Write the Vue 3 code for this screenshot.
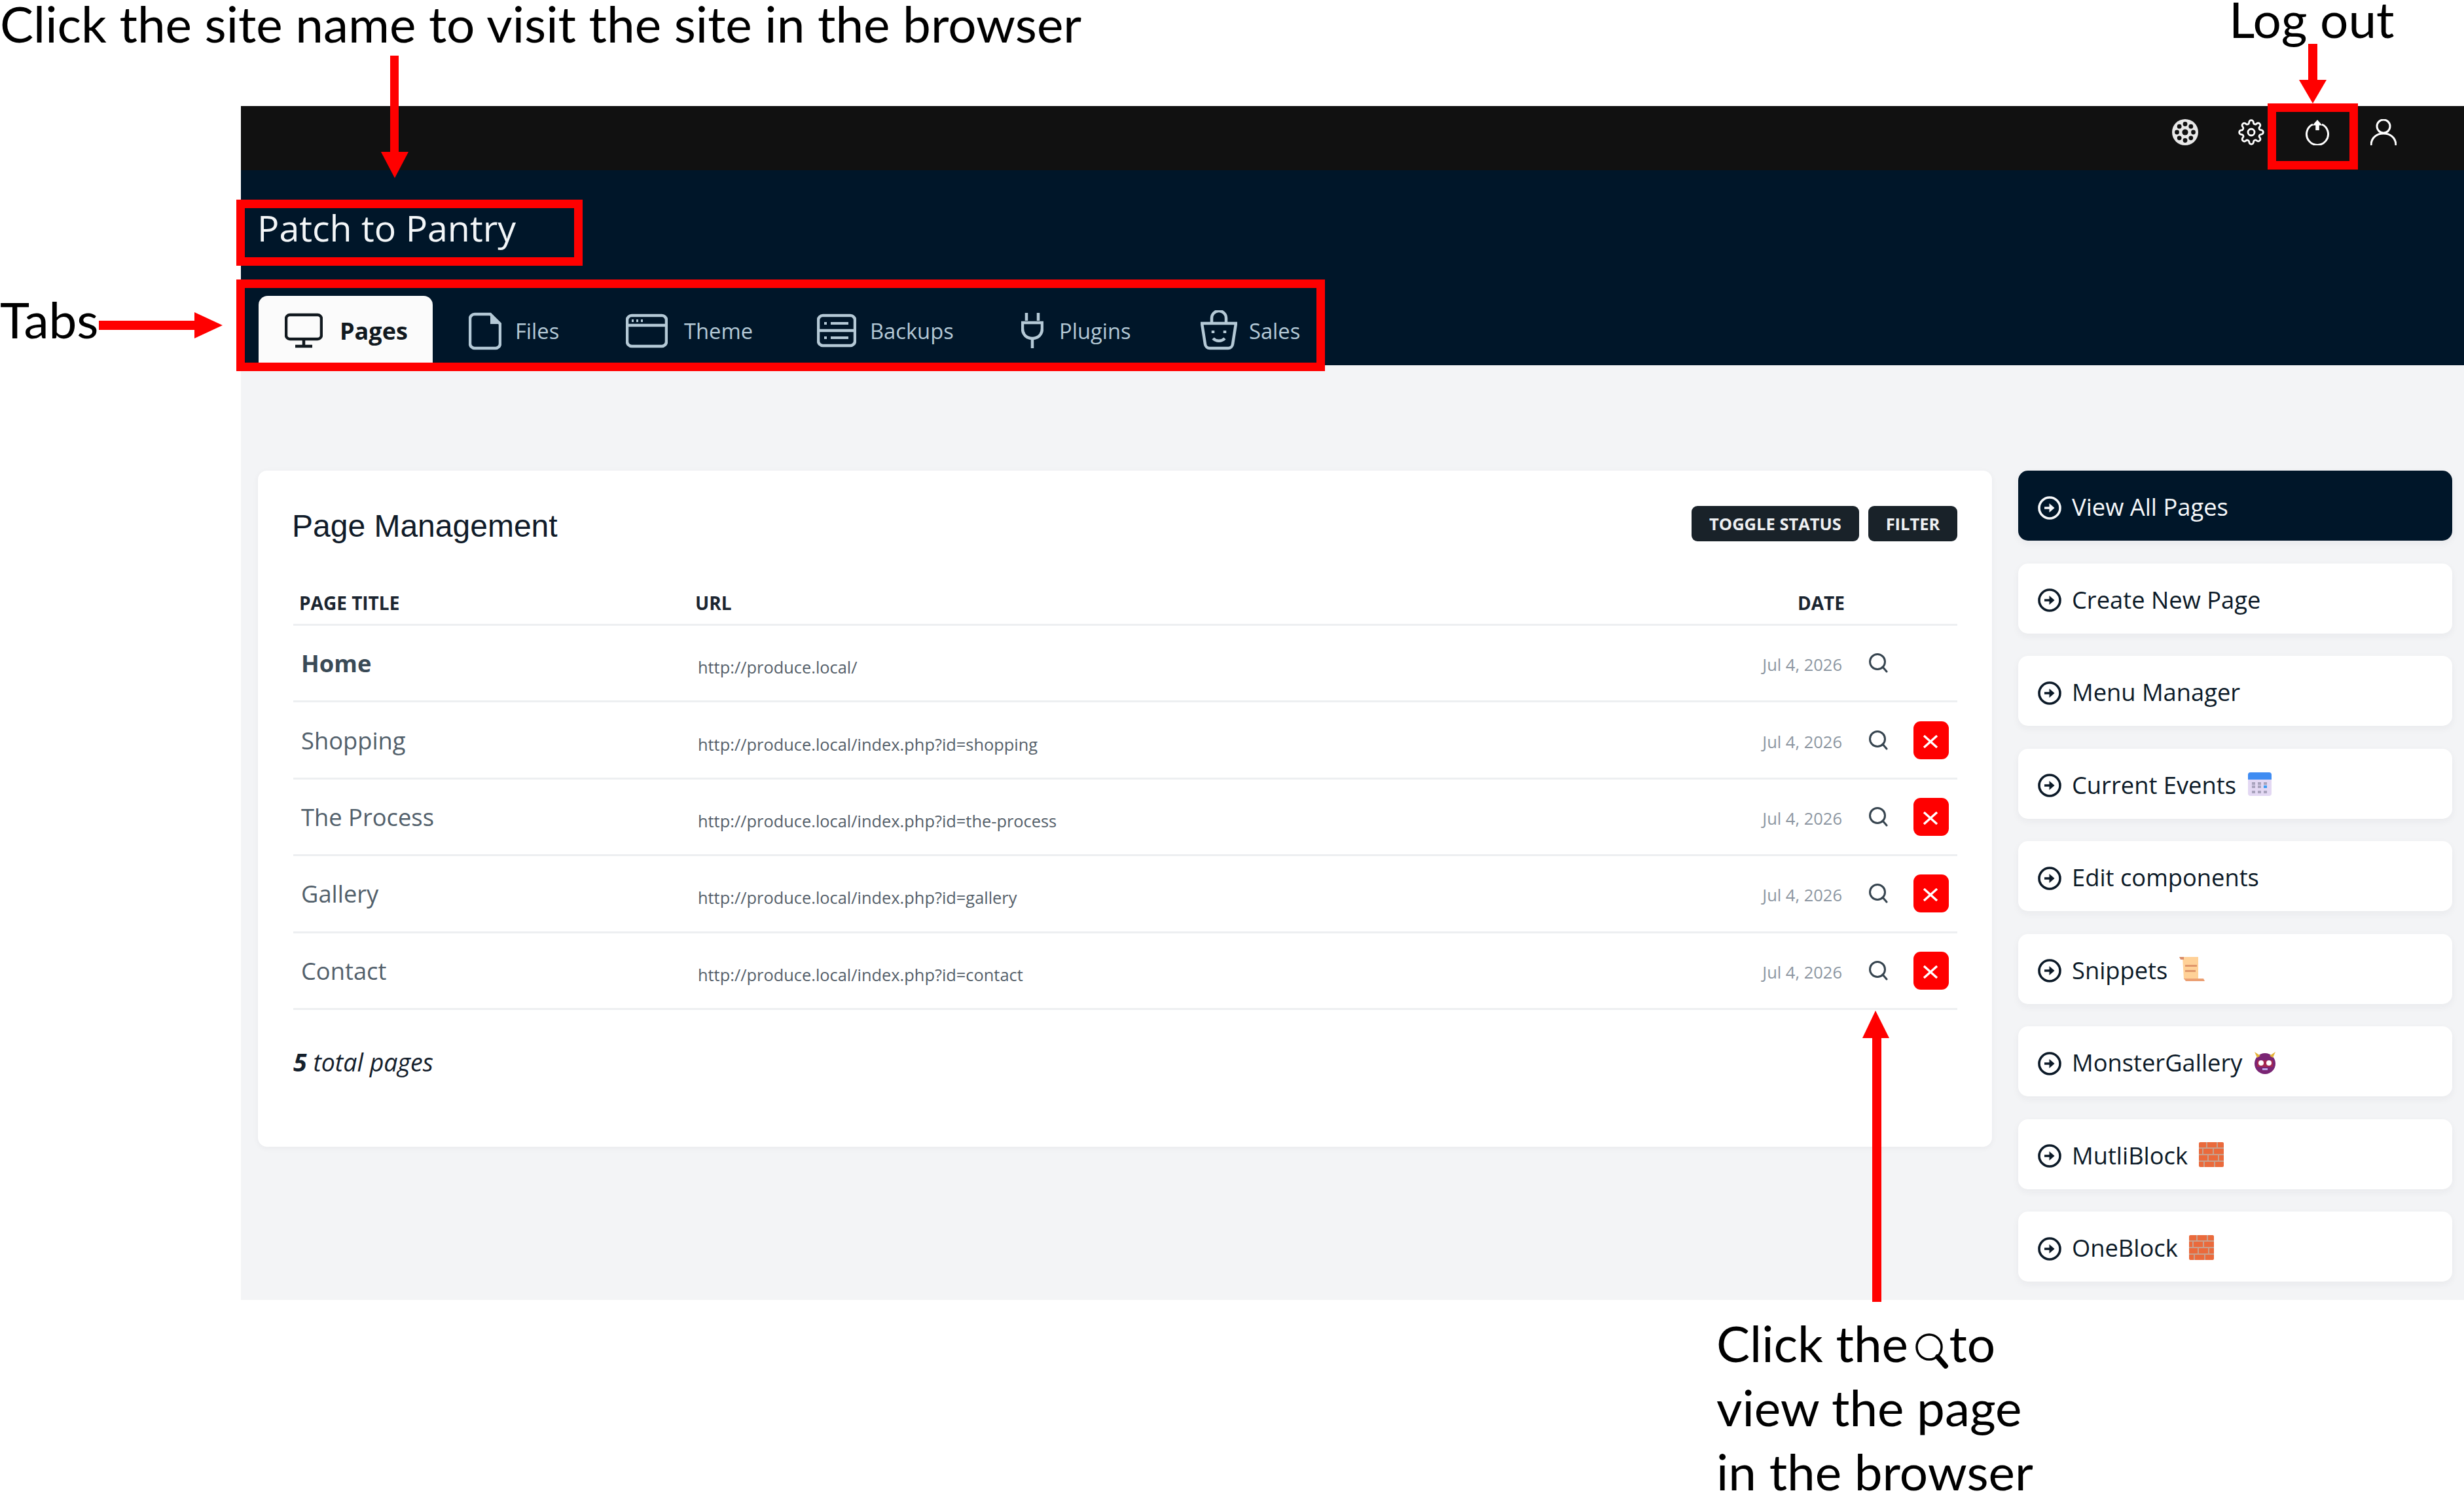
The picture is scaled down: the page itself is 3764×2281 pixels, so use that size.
<template>
  <div class="page">
    <div class="app">
      <div class="topbar">
        <svg class="top-icon" viewBox="0 0 40 40">
          <circle cx="20" cy="20" r="20" fill="#e8e8e8" />
          <circle cx="20" cy="20" r="4.6" fill="#111" />
          <circle v-for="d in wheelDots" :key="d.x + '-' + d.y" :cx="d.x" :cy="d.y" r="3.4" fill="#111" />
        </svg>
        <svg class="top-icon" viewBox="0 0 24 24" fill="none" stroke="currentColor" stroke-width="1.7">
          <circle cx="12" cy="12" r="3" />
          <path d="M19.4 15a1.65 1.65 0 0 0 .33 1.82l.06.06a2 2 0 0 1 0 2.83 2 2 0 0 1-2.83 0l-.06-.06a1.65 1.65 0 0 0-1.82-.33 1.65 1.65 0 0 0-1 1.51V21a2 2 0 0 1-2 2 2 2 0 0 1-2-2v-.09A1.65 1.65 0 0 0 9 19.4a1.65 1.65 0 0 0-1.82.33l-.06.06a2 2 0 0 1-2.83 0 2 2 0 0 1 0-2.83l.06-.06a1.65 1.65 0 0 0 .33-1.82 1.65 1.65 0 0 0-1.51-1H3a2 2 0 0 1-2-2 2 2 0 0 1 2-2h.09A1.65 1.65 0 0 0 4.6 9a1.65 1.65 0 0 0-.33-1.82l-.06-.06a2 2 0 0 1 0-2.83 2 2 0 0 1 2.83 0l.06.06a1.65 1.65 0 0 0 1.82.33H9a1.65 1.65 0 0 0 1-1.51V3a2 2 0 0 1 2-2 2 2 0 0 1 2 2v.09a1.65 1.65 0 0 0 1 1.51 1.65 1.65 0 0 0 1.82-.33l.06-.06a2 2 0 0 1 2.83 0 2 2 0 0 1 0 2.83l-.06.06a1.65 1.65 0 0 0-.33 1.82V9a1.65 1.65 0 0 0 1.51 1H21a2 2 0 0 1 2 2 2 2 0 0 1-2 2h-.09a1.65 1.65 0 0 0-1.51 1z" />
        </svg>
        <svg class="top-icon" viewBox="0 0 40 40" fill="none" stroke="currentColor" stroke-width="3">
          <path d="M13 8a16.5 16.5 0 1 0 14 0" />
          <path d="M20 17V6" stroke-width="5.5" />
          <path d="M12.5 9.5L20 1l7.5 8.5z" fill="currentColor" stroke="none" />
        </svg>
        <svg class="top-icon" viewBox="0 0 40 40" fill="none" stroke="currentColor" stroke-width="3">
          <circle cx="20" cy="11" r="10" />
          <path d="M1 40c0-11 8-18 19-18s19 7 19 18" />
        </svg>
      </div>

      <div class="header">
        <div class="site-name">Patch to Pantry</div>
        <nav class="tabs">
          <div
            v-for="tab in tabs"
            :key="tab.label"
            class="tab"
            :class="{ active: tab.active }"
            :style="{ width: tab.width + 'px', gap: tab.gap + 'px' }"
          >
            <svg v-if="tab.label === 'Pages'" width="58" height="60" viewBox="0 0 58 60" fill="none" stroke="currentColor" stroke-width="4.5">
              <rect x="2" y="6" width="54" height="37" rx="6" />
              <path d="M29 43v10M16 54h26" />
            </svg>
            <svg v-else-if="tab.label === 'Files'" width="50" height="60" viewBox="0 0 50 60" fill="none" stroke="currentColor" stroke-width="4.5">
              <path d="M9 5h24l15 15v30a7 7 0 0 1-7 7H9a7 7 0 0 1-7-7V12a7 7 0 0 1 7-7z" />
              <path d="M33 5v15h15z" fill="currentColor" stroke="none" />
            </svg>
            <svg v-else-if="tab.label === 'Theme'" width="64" height="60" viewBox="0 0 64 60" fill="none" stroke="currentColor" stroke-width="4.5">
              <rect x="2" y="7" width="60" height="47" rx="7" />
              <path d="M2 22h60" />
              <path d="M9 15h3M16 15h3M23 15h3" stroke-width="4" />
            </svg>
            <svg v-else-if="tab.label === 'Backups'" width="60" height="60" viewBox="0 0 60 60" fill="none" stroke="currentColor" stroke-width="4.5">
              <rect x="2" y="7" width="56" height="46" rx="7" />
              <path d="M2 30h56" />
              <path d="M11 19h4M21 19h27M11 41h4M21 41h27" stroke-width="4" />
            </svg>
            <svg v-else-if="tab.label === 'Plugins'" width="34" height="60" viewBox="0 0 34 60" fill="none" stroke="currentColor" stroke-width="4.5">
              <path d="M8 3v12M26 3v12" />
              <path d="M2 18h30v9c0 9-6 15-15 15S2 36 2 27z" />
              <path d="M17 42v15" />
            </svg>
            <svg v-else width="56" height="62" viewBox="0 0 56 62" fill="none" stroke="currentColor" stroke-width="4.5">
              <path d="M17 20v-8a11 11 0 0 1 22 0v8" />
              <path d="M2 20h52l-5 32a7 7 0 0 1-7 6H14a7 7 0 0 1-7-6z" />
              <path d="M19 31v4M37 31v4" />
              <path d="M19 43c5 5 13 5 18 0" />
            </svg>
            <span class="tab-label">{{ tab.label }}</span>
          </div>
        </nav>
      </div>

      <div class="content">
        <section class="card">
          <div class="card-head">
            <h2 class="card-title">Page Management</h2>
            <div class="card-actions">
              <button class="btn btn-toggle">TOGGLE STATUS</button>
              <button class="btn btn-filter">FILTER</button>
            </div>
          </div>

          <div class="thead">
            <span>PAGE TITLE</span>
            <span>URL</span>
            <span class="th-date">DATE</span>
          </div>

          <div v-for="page in pages" :key="page.title" class="row">
            <span class="row-title" :class="{ home: page.home }">{{ page.title }}</span>
            <span class="row-url">{{ page.url }}</span>
            <span class="row-date">Jul 4, 2026</span>
            <span class="row-view">
              <svg width="30" height="30" viewBox="0 0 30 30" fill="none" stroke="#36444f" stroke-width="3">
                <circle cx="14" cy="13" r="11.5" />
                <path d="M22 21l6 7" stroke-linecap="round" />
              </svg>
            </span>
            <span class="row-del">
              <button v-if="!page.home" class="del-btn">
                <svg width="24" height="20" viewBox="0 0 24 20" fill="none" stroke="#fff" stroke-width="3.4">
                  <path d="M2 1l20 18M22 1L2 19" />
                </svg>
              </button>
            </span>
          </div>

          <p class="total"><b>5</b> total pages</p>
        </section>

        <aside class="side">
          <a v-for="(item, i) in sideItems" :key="item.label" class="side-item" :class="{ current: i === 0 }">
            <svg class="go-icon" width="36" height="36" viewBox="0 0 36 36">
              <circle cx="18" cy="18" r="16" fill="none" stroke="currentColor" stroke-width="3.6" />
              <path d="M10 16.2h7.5V11l8 7-8 7v-5.2H10z" fill="currentColor" />
            </svg>
            <span class="side-label">{{ item.label }}</span>
            <svg v-if="item.emoji === 'calendar'" class="emoji" width="38" height="38" viewBox="0 0 38 38">
              <rect x="1" y="1" width="36" height="36" rx="4" fill="#e3d8f3" />
              <path d="M1 12V5a4 4 0 0 1 4-4h28a4 4 0 0 1 4 4v7z" fill="#3f8cf2" />
              <g fill="#a9a3bd">
                <rect v-for="c in calendarCells" :key="c.x + '-' + c.y" :x="c.x" :y="c.y" width="5" height="4" />
              </g>
              <rect x="25" y="21" width="5" height="4" fill="#3f9cf2" />
            </svg>
            <svg v-else-if="item.emoji === 'scroll'" class="emoji scroll" width="40" height="40" viewBox="0 0 40 40">
              <path d="M6 1h24v34H8z" fill="#ffd197" />
              <path d="M1 1h7v4H3z" fill="#d98c68" />
              <path d="M10 13h18v3H10zM10 21h16v3H10z" fill="#e0976a" />
              <path d="M8 34h30l2 4H11z" fill="#eb9f72" />
            </svg>
            <svg v-else-if="item.emoji === 'monster'" class="emoji" width="36" height="36" viewBox="0 0 36 36">
              <circle cx="18" cy="20" r="16" fill="#7a2574" />
              <path d="M2 2l9 6-5 3zM34 2l-9 6 5 3z" fill="#e5b43c" />
              <path d="M6 15h24v10H6z" fill="#a52850" />
              <circle cx="12" cy="19" r="4" fill="#fff" />
              <circle cx="24" cy="19" r="4" fill="#fff" />
              <path d="M14 27h8v3h-8z" fill="#b9a4e6" />
            </svg>
            <svg v-else-if="item.emoji === 'brick'" class="emoji" width="38" height="38" viewBox="0 0 38 38">
              <rect width="38" height="38" rx="2" fill="#ea6a3c" />
              <path d="M0 9h38M0 19h38M0 29h38M12 0v9M28 0v9M6 9v10M22 9v10M14 19v10M30 19v10M8 29v9M24 29v9" stroke="#c8a08c" stroke-width="2" fill="none" />
            </svg>
          </a>
        </aside>
      </div>
    </div>

    <!-- annotations laid over the screenshot -->
    <div class="note note-site">Click the site name to visit the site in the browser</div>
    <div class="note note-tabs">Tabs</div>
    <div class="note note-logout">Log out</div>
    <div class="note note-view">
      <div>Click the
        <svg class="note-search" width="52" height="54" viewBox="0 0 52 54" fill="none" stroke="#000">
          <circle cx="21" cy="21" r="19" stroke-width="3.5" />
          <path d="M34 36l12 14" stroke-width="8" stroke-linecap="round" />
        </svg>to</div>
      <div>view the page</div>
      <div>in the browser</div>
    </div>

    <div class="box box-site"></div>
    <div class="box box-tabs"></div>
    <div class="box box-logout"></div>

    <svg class="arrows" width="3764" height="2281" viewBox="0 0 3764 2281" fill="#f00">
      <path d="M596 85h13v147h15l-21 40-21-40h14z" />
      <path d="M151 490h146v-13l43 20-43 20v-13H151z" />
      <path d="M3526 67h14v55h14l-21 36-21-36h14z" />
      <path d="M2860 1989V1586h-15l20-42 21 42h-12v403z" />
    </svg>
  </div>
</template>

<script setup>
const wheelDots = Array.from({ length: 8 }, (_, i) => {
  const a = (i * Math.PI) / 4
  return { x: +(20 + 12.5 * Math.cos(a)).toFixed(2), y: +(20 + 12.5 * Math.sin(a)).toFixed(2) }
})

const calendarCells = []
for (const y of [16, 21, 29]) {
  for (const x of [7, 16, 25]) calendarCells.push({ x, y })
}

const tabs = [
  { label: 'Pages', active: true, width: 266, gap: 26 },
  { label: 'Files', width: 240, gap: 21 },
  { label: 'Theme', width: 292, gap: 25 },
  { label: 'Backups', width: 312, gap: 21 },
  { label: 'Plugins', width: 274, gap: 24 },
  { label: 'Sales', width: 230, gap: 18 },
]

const pages = [
  { title: 'Home', url: 'http://produce.local/', home: true },
  { title: 'Shopping', url: 'http://produce.local/index.php?id=shopping' },
  { title: 'The Process', url: 'http://produce.local/index.php?id=the-process' },
  { title: 'Gallery', url: 'http://produce.local/index.php?id=gallery' },
  { title: 'Contact', url: 'http://produce.local/index.php?id=contact' },
]

const sideItems = [
  { label: 'View All Pages' },
  { label: 'Create New Page' },
  { label: 'Menu Manager' },
  { label: 'Current Events', emoji: 'calendar' },
  { label: 'Edit components' },
  { label: 'Snippets', emoji: 'scroll' },
  { label: 'MonsterGallery', emoji: 'monster' },
  { label: 'MutliBlock', emoji: 'brick' },
  { label: 'OneBlock', emoji: 'brick' },
]
</script>

<style>
html,
body {
  margin: 0;
  background: #fff;
}
</style>

<style scoped>
.page {
  position: relative;
  width: 3764px;
  height: 2281px;
  padding: 162px 0 0 368px;
  box-sizing: border-box;
  overflow: hidden;
  background: #fff;
  font-family: "Open Sans", "Noto Sans", sans-serif;
}

.topbar {
  height: 98px;
  background: #111;
  color: #fff;
  display: flex;
  justify-content: flex-end;
  gap: 61px;
  padding: 20px 103px 0 0;
  box-sizing: border-box;
}

.top-icon {
  width: 40px;
  height: 40px;
}

.header {
  height: 298px;
  background: #001629;
  box-sizing: border-box;
  padding: 50px 0 0 25px;
  display: flex;
  flex-direction: column;
  justify-content: space-between;
}

.site-name {
  color: #f3f6f8;
  font-size: 55.5px;
  line-height: 76px;
}

.tabs {
  display: flex;
  height: 106px;
  padding-left: 2px;
}

.tab {
  display: flex;
  align-items: center;
  box-sizing: border-box;
  padding: 0 0 0 40px;
  color: #b4c9d6;
  font-size: 32.7px;
  flex-shrink: 0;
}

.tab.active {
  background: #fbfbfb;
  border-radius: 14px 14px 0 0;
  color: #11191f;
  font-size: 36px;
  font-weight: 700;
  margin-right: 15px;
}

.content {
  height: 1428px;
  background: #f3f4f6;
  box-sizing: border-box;
  padding: 161px 0 0 26px;
  display: flex;
  gap: 40px;
}

.card {
  width: 2649px;
  height: 1033px;
  box-sizing: border-box;
  padding: 54px 53px 0 54px;
  background: #fff;
  border-radius: 14px;
  box-shadow: 0 2px 10px rgba(30, 40, 60, 0.05);
}

.card-head {
  display: flex;
  justify-content: space-between;
  height: 54px;
}

.card-title {
  margin: 8px 0 0 -2px;
  font: 400 48px/46px "Liberation Sans", Arial, sans-serif;
  color: #101b29;
}

.card-actions {
  display: flex;
  gap: 14px;
}

.btn {
  height: 54px;
  border: 0;
  border-radius: 9px;
  background: #192229;
  color: #eef0f2;
  font: 700 25.5px "Open Sans", sans-serif;
  padding: 0;
}

.btn-toggle {
  width: 256px;
}

.btn-filter {
  width: 136px;
}

.thead {
  height: 126px;
  padding: 0 0 0 9px;
  display: grid;
  grid-template-columns: 605px 1fr 128px 172px;
  align-items: end;
  font-size: 28px;
  font-weight: 700;
  line-height: 64px;
  color: #1b2530;
  border-bottom: 3px solid #edeff1;
}

.th-date {
  text-align: right;
}

.row {
  display: grid;
  grid-template-columns: 618px 1620px 128px 109px 67px;
  align-items: center;
  height: 117.4px;
  box-sizing: border-box;
  border-bottom: 3px solid #edeff1;
}

.row-title {
  padding-left: 12px;
  font-size: 36.3px;
  color: #52606b;
}

.row-title.home {
  font-weight: 700;
  color: #3a4a56;
}

.row-url {
  font-size: 25.4px;
  color: #55606a;
  padding-top: 12px;
}

.row-date {
  font-size: 25.5px;
  color: #8c96a1;
  text-align: right;
  white-space: nowrap;
  padding-top: 4px;
}

.row-view {
  display: flex;
  justify-content: center;
}

.del-btn {
  display: flex;
  align-items: center;
  justify-content: center;
  width: 54px;
  height: 58px;
  padding: 4px 2px 0 0;
  border: 0;
  border-radius: 11px;
  background: #f00;
}

.total {
  margin: 55px 0 0;
  font-size: 37.5px;
  line-height: 50px;
  font-style: italic;
  color: #14202c;
}

.side {
  width: 663px;
  display: flex;
  flex-direction: column;
  gap: 34.5px;
}

.side-item {
  height: 107px;
  flex-shrink: 0;
  box-sizing: border-box;
  padding: 6px 0 0 30px;
  display: flex;
  align-items: center;
  border-radius: 15px;
  background: #fff;
  box-shadow: 0 4px 12px rgba(30, 40, 60, 0.05);
  font-size: 36.3px;
  color: #0c1a28;
}

.side-item.current {
  background: #001629;
  color: #f6f8fa;
}

.side-label {
  margin-top: -3px;
}

.go-icon {
  margin-right: 16px;
  flex-shrink: 0;
}

.emoji {
  margin: -4px 0 0 17px;
}

.note {
  position: absolute;
  font-family: Lato, sans-serif;
  font-size: 76.5px;
  color: #000;
  line-height: 98px;
  white-space: nowrap;
}

.note-site {
  left: 0;
  top: -14px;
}

.note-tabs {
  left: 0;
  top: 438px;
}

.note-logout {
  left: 3405px;
  top: -21px;
}

.note-view {
  left: 2622px;
  top: 2002px;
}

.note-search {
  vertical-align: -10px;
  margin-left: -9px;
}

.box {
  position: absolute;
  border: 13px solid #f00;
  box-sizing: border-box;
}

.box-site {
  left: 361px;
  top: 305px;
  width: 529px;
  height: 101px;
}

.box-tabs {
  left: 361px;
  top: 427px;
  width: 1663px;
  height: 140px;
}

.box-logout {
  left: 3464px;
  top: 158px;
  width: 138px;
  height: 101px;
}

.arrows {
  position: absolute;
  left: 0;
  top: 0;
  pointer-events: none;
}
</style>
